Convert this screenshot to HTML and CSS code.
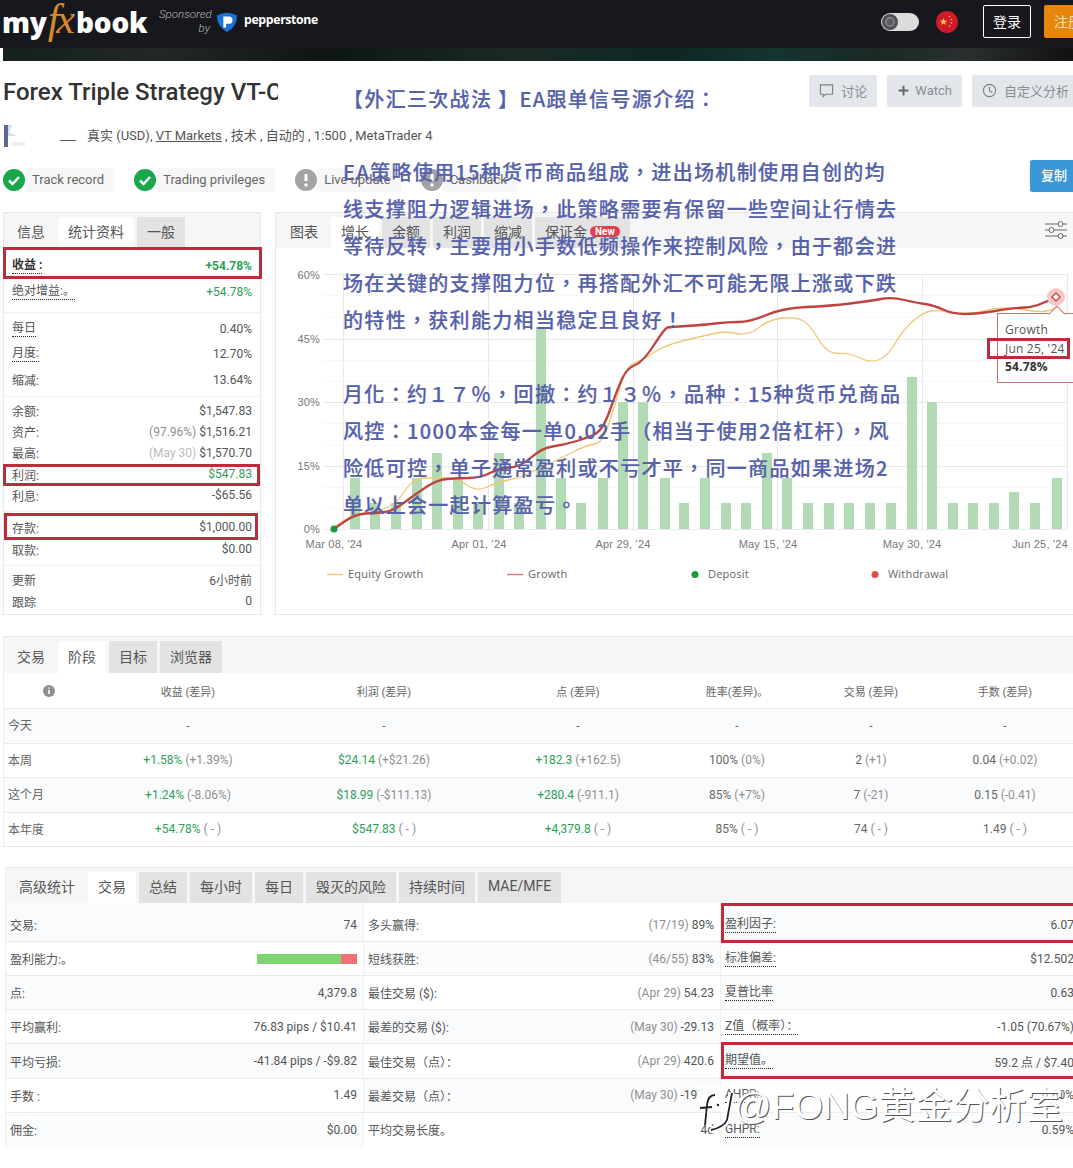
FILE: index.html
```html
<!DOCTYPE html>
<html lang="zh-CN">
<head>
<meta charset="utf-8">
<title>Forex Triple Strategy</title>
<link rel="stylesheet" href="styles.css">
</head>
<body>
<div class="page">
  <header class="topbar">
    <div class="logo"><span>my</span><em>fx</em><span>book</span></div>
    <div class="sponsor">Sponsored<br>by</div>
    <svg class="pep-icon" viewBox="0 0 24 24"><path class="pep-shield" d="M1 5 Q12 -1 23 5 Q23 17 12 23 Q1 17 1 5Z"/><path class="pep-p" d="M8 18V6h6a4 4 0 0 1 0 8h-3v4Z"/></svg>
    <div class="pep-name">pepperstone</div>
    <div class="topbar-right">
      <div class="toggle"><span class="knob"></span></div>
      <svg class="flag" viewBox="0 0 22 22"><circle class="flag-bg" cx="11" cy="11" r="11"/><path class="flag-star" d="M7.500 7l1 2.600 2.700.1-2.100 1.700.8 2.700-2.400-1.600-2.300 1.600.7-2.700-2.100-1.700 2.700-.1Z"/><circle class="flag-star" cx="13.500" cy="5.500" r=".8"/><circle class="flag-star" cx="15.500" cy="8.500" r=".8"/><circle class="flag-star" cx="15.500" cy="12" r=".8"/><circle class="flag-star" cx="13.500" cy="15" r=".8"/></svg>
      <div class="login">登录</div>
      <div class="register">注册</div>
    </div>
  </header>
  <div class="strip"></div>

  <div class="title-row">
    <h1 class="title">Forex Triple Strategy VT-C</h1>
    <div class="actions">
      <div class="action"><svg class="ic" viewBox="0 0 16 16"><path d="M1.500 2h13v10H7l-2.500 2.500V12h-3Z"/></svg>讨论</div>
      <div class="action"><svg class="ic ic-plus" viewBox="0 0 16 16"><path d="M8 2v12M2 8h12"/></svg>Watch</div>
      <div class="action"><svg class="ic" viewBox="0 0 16 16"><circle cx="8" cy="8" r="6.500"/><path d="M8 4v4.500l3 1.500"/></svg>自定义分析</div>
    </div>
  </div>

  <div class="meta-row">
    <svg class="avatar" viewBox="0 0 22 22"><rect class="av-a" x="0" y="0" width="4" height="22"/><path class="av-b" d="M4 0h4l-3 8 6 2v1H4Z"/><rect class="av-c" x="8" y="17" width="13" height="4"/></svg>
    <span class="blank-name"></span>
    <span class="meta-text">真实 (USD), <u>VT Markets</u> , 技术 , 自动的 , 1:500 , MetaTrader 4</span>
  </div>

  <div class="badge-row">
    <div class="badge"><svg class="bi" viewBox="0 0 22 22"><circle class="ok" cx="11" cy="11" r="11"/><path class="tick" d="M6 11.500l3.500 3.500 6.500-7"/></svg><span>Track record</span></div>
    <div class="badge"><svg class="bi" viewBox="0 0 22 22"><circle class="ok" cx="11" cy="11" r="11"/><path class="tick" d="M6 11.500l3.500 3.500 6.500-7"/></svg><span>Trading privileges</span></div>
    <div class="badge"><svg class="bi" viewBox="0 0 22 22"><circle class="warn" cx="11" cy="11" r="11"/><path class="bang" d="M11 5v7"/><circle class="bang-dot" cx="11" cy="16" r="1.700"/></svg><span>Live update</span></div>
    <div class="badge"><svg class="bi" viewBox="0 0 22 22"><circle class="warn" cx="11" cy="11" r="11"/><path class="bang" d="M11 5v7"/><circle class="bang-dot" cx="11" cy="16" r="1.700"/></svg><span>Cashback</span></div>
    <div class="copy">复制</div>
  </div>

  <div class="panels">
    <section class="panel panel-left">
      <div class="tabs">
        <div class="tab">信息</div><div class="tab active">统计资料</div><div class="tab off">一般</div>
      </div>
      <div class="group g1">
        <div class="stat h26"><b class="lbl dot">收益 :</b><b class="green">+54.78%</b></div>
        <div class="stat h26"><span class="lbl dot">绝对增益:。</span><span class="green">+54.78%</span></div>
      </div>
      <div class="group g2">
        <div class="stat h25"><span class="lbl dot">每日</span><span>0.40%</span></div>
        <div class="stat h25"><span class="lbl dot">月度:</span><span>12.70%</span></div>
        <div class="stat h25"><span class="lbl">缩减:</span><span>13.64%</span></div>
      </div>
      <div class="group g3">
        <div class="stat h21"><span class="lbl">余额:</span><span>$1,547.83</span></div>
        <div class="stat h21"><span class="lbl">资产:</span><span><i class="muted">(97.96%)</i> $1,516.21</span></div>
        <div class="stat h21"><span class="lbl">最高:</span><span><i class="muted light">(May 30)</i> $1,570.70</span></div>
        <div class="stat h21"><span class="lbl">利润:</span><span class="green">$547.83</span></div>
        <div class="stat h21"><span class="lbl">利息:</span><span>-$65.56</span></div>
      </div>
      <div class="group g4">
        <div class="stat h22"><span class="lbl">存款:</span><span>$1,000.00</span></div>
        <div class="stat h22"><span class="lbl">取款:</span><span>$0.00</span></div>
      </div>
      <div class="group g5">
        <div class="stat h22"><span class="lbl">更新</span><span>6小时前</span></div>
        <div class="stat h22"><span class="lbl">跟踪</span><span>0</span></div>
      </div>
    </section>

    <section class="panel panel-chart">
      <div class="tabs">
        <div class="tab">图表</div><div class="tab active">增长</div><div class="tab off">余额</div><div class="tab off">利润</div><div class="tab off">缩减</div>
        <div class="tab off tab-new">保证金<span class="new">New</span></div>
        <svg class="sliders" viewBox="0 0 22 20"><path d="M0 4h13M18 4h4M0 10h4M9 10h13M0 16h13M18 16h4"/><circle cx="15.500" cy="4" r="2.500"/><circle cx="6.500" cy="10" r="2.500"/><circle cx="15.500" cy="16" r="2.500"/></svg>
      </div>
      <svg class="chart" viewBox="276 248 797 366" width="797" height="366">
        <g class="minor">
          <path d="M323 295.500H1068M323 317.500H1068M323 360.500H1068M323 381.500H1068M323 423.500H1068M323 445.500H1068M323 487.500H1068M323 508.500H1068"/>
        </g>
        <g class="grid">
          <path d="M323 274.500H1068M323 339.500H1068M323 402.500H1068M323 466.500H1068M323 529.500H1068"/>
          <path d="M343.500 274V529M488.500 274V529M633.500 274V529M777.500 274V529M922.500 274V529M1067.500 274V529"/>
        </g>
        <g class="bars">
          <rect x="350" y="478" width="10" height="51"/><rect x="370" y="503" width="10" height="26"/><rect x="391" y="503" width="10" height="26"/><rect x="412" y="478" width="10" height="51"/><rect x="432" y="453" width="10" height="76"/><rect x="453" y="478" width="10" height="51"/><rect x="473" y="503" width="10" height="26"/><rect x="494" y="453" width="10" height="76"/><rect x="514" y="503" width="10" height="26"/><rect x="536" y="327" width="10" height="202"/><rect x="556" y="478" width="10" height="51"/><rect x="576" y="503" width="10" height="26"/><rect x="598" y="478" width="10" height="51"/><rect x="618" y="402" width="10" height="127"/><rect x="638" y="402" width="10" height="127"/><rect x="660" y="478" width="10" height="51"/>
          <rect x="679" y="503" width="10" height="26"/><rect x="700" y="478" width="10" height="51"/><rect x="721" y="503" width="10" height="26"/><rect x="741" y="503" width="10" height="26"/><rect x="762" y="453" width="10" height="76"/><rect x="782" y="478" width="10" height="51"/><rect x="803" y="503" width="10" height="26"/><rect x="824" y="503" width="10" height="26"/><rect x="844" y="503" width="10" height="26"/><rect x="865" y="503" width="10" height="26"/><rect x="886" y="503" width="10" height="26"/><rect x="907" y="377" width="10" height="152"/><rect x="927" y="402" width="10" height="127"/><rect x="948" y="503" width="10" height="26"/><rect x="968" y="503" width="10" height="26"/><rect x="989" y="503" width="10" height="26"/><rect x="1009" y="492" width="10" height="37"/><rect x="1030" y="503" width="10" height="26"/><rect x="1052" y="478" width="10" height="51"/>
        </g>
        <path class="line-eq" d="M334 527 L344.500 520.500 Q355 514 366 513 Q377 512 387 507.500 Q397 503 405 490.500 Q413 478 425 478 Q437 478 447 478 Q457 478 467 485 Q477 492 487 487 Q497 482 508.500 480 Q520 478 531 472.500 Q542 467 552.500 462 Q563 457 575 451 Q587 445 595 444 Q603 443 610 420 Q617 397 622 381 Q627 365 635 362.500 Q643 360 654 352.500 Q665 345 684 340.500 Q703 336 714 333.500 Q725 331 736.500 333.500 Q748 336 759 327.500 Q770 319 783.500 318 Q797 317 803.500 321 Q810 325 818.500 339.500 Q827 354 838.500 353.500 Q850 353 860 358 Q870 363 878.500 360 Q887 357 895 343.500 Q903 330 913 321 Q923 312 931.500 311 Q940 310 946.500 312 Q953 314 965 313.500 Q977 313 985 310.500 Q993 308 1003 308 Q1013 308 1021.500 309.500 Q1030 311 1040 311.500 Q1050 312 1056 307"/>
        <path class="line-gr" d="M334 529 L344.500 521.500 Q355 514 366 513.500 Q377 513 385 512 Q393 511 405 502 Q417 493 427 486.500 Q437 480 447 479 Q457 478 468.500 478 Q480 478 490 473 Q500 468 510 467.500 Q520 467 531 457.500 Q542 448 552.500 446.500 Q563 445 575 441.500 Q587 438 595 434 Q603 430 610 410 Q617 390 622 379 Q627 368 635 365 Q643 362 654 345 Q665 328 667.500 327.500 Q670 327 686.500 326 Q703 325 715 323.500 Q727 322 738.500 322 Q750 322 766.500 315 Q783 308 806.500 307 Q830 306 850 303.500 Q870 301 881 299 Q892 297 904.500 300 Q917 303 925 304 Q933 305 943 309.500 Q953 314 965 314 Q977 314 995 311 Q1013 308 1025 307.500 Q1037 307 1056 297"/>
        <circle class="start" cx="334" cy="529" r="3.500"/>
        <circle class="halo" cx="1056" cy="297" r="9"/>
        <path class="ring" d="M1056 293l4 4-4 4-4-4Z"/>
        <g class="axis">
          <text x="320" y="279" text-anchor="end">60%</text><text x="320" y="343" text-anchor="end">45%</text><text x="320" y="406" text-anchor="end">30%</text><text x="320" y="470" text-anchor="end">15%</text><text x="320" y="533" text-anchor="end">0%</text>
          <text x="334" y="548" text-anchor="middle">Mar 08, '24</text><text x="479" y="548" text-anchor="middle">Apr 01, '24</text><text x="623" y="548" text-anchor="middle">Apr 29, '24</text><text x="768" y="548" text-anchor="middle">May 15, '24</text><text x="912" y="548" text-anchor="middle">May 30, '24</text><text x="1040" y="548" text-anchor="middle">Jun 25, '24</text>
        </g>
        <g class="legend">
          <path class="lg-eq" d="M327 574.500h16"/><text x="348" y="578">Equity Growth</text>
          <path class="lg-gr" d="M507 574.500h16"/><text x="528" y="578">Growth</text>
          <circle class="start" cx="695" cy="574.500" r="3.500"/><text x="708" y="578">Deposit</text>
          <circle class="wd" cx="875" cy="574.500" r="3.500"/><text x="888" y="578">Withdrawal</text>
        </g>
      </svg>
    </section>
  </div>

  <section class="table-sec periods">
    <div class="tabs tabs-sm">
      <div class="tab">交易</div><div class="tab active">阶段</div><div class="tab off">目标</div><div class="tab off">浏览器</div>
    </div>
    <div class="p-row p-head">
      <div class="p-info"><svg class="info" viewBox="0 0 12 12"><circle cx="6" cy="6" r="6"/><path d="M6 5v4M6 2.500v1.200"/></svg></div><div>收益 (差异)</div><div>利润 (差异)</div><div>点 (差异)</div><div>胜率(差异)。</div><div>交易 (差异)</div><div>手数 (差异)</div>
    </div>
    <div class="p-row alt"><div class="p-lbl">今天</div><div>-</div><div>-</div><div>-</div><div>-</div><div>-</div><div>-</div></div>
    <div class="p-row"><div class="p-lbl">本周</div><div><span class="green">+1.58%</span> <i class="muted">(+1.39%)</i></div><div><span class="green">$24.14</span> <i class="muted">(+$21.26)</i></div><div><span class="green">+182.3</span> <i class="muted">(+162.5)</i></div><div>100% <i class="muted">(0%)</i></div><div>2 <i class="muted">(+1)</i></div><div>0.04 <i class="muted">(+0.02)</i></div></div>
    <div class="p-row alt"><div class="p-lbl">这个月</div><div><span class="green">+1.24%</span> <i class="muted">(-8.06%)</i></div><div><span class="green">$18.99</span> <i class="muted">(-$111.13)</i></div><div><span class="green">+280.4</span> <i class="muted">(-911.1)</i></div><div>85% <i class="muted">(+7%)</i></div><div>7 <i class="muted">(-21)</i></div><div>0.15 <i class="muted">(-0.41)</i></div></div>
    <div class="p-row"><div class="p-lbl">本年度</div><div><span class="green">+54.78%</span> <i class="muted">( - )</i></div><div><span class="green">$547.83</span> <i class="muted">( - )</i></div><div><span class="green">+4,379.8</span> <i class="muted">( - )</i></div><div>85% <i class="muted">( - )</i></div><div>74 <i class="muted">( - )</i></div><div>1.49 <i class="muted">( - )</i></div></div>
  </section>

  <section class="table-sec advanced">
    <div class="tabs tabs-sm">
      <div class="tab">高级统计</div><div class="tab active">交易</div><div class="tab off">总结</div><div class="tab off">每小时</div><div class="tab off">每日</div><div class="tab off">毁灭的风险</div><div class="tab off">持续时间</div><div class="tab off">MAE/MFE</div>
    </div>
    <div class="a-row first alt">
      <div class="cell"><span>交易:</span><span>74</span></div>
      <div class="cell plain"><span>多头赢得:</span><span><i class="muted">(17/19)</i> 89%</span></div>
      <div class="cell"><span class="dot">盈利因子:</span><span>6.07</span></div>
    </div>
    <div class="a-row">
      <div class="cell"><span>盈利能力:。</span><span class="ratio"><span class="ratio-win"></span><span class="ratio-loss"></span></span></div>
      <div class="cell alt"><span>短线获胜:</span><span><i class="muted">(46/55)</i> 83%</span></div>
      <div class="cell"><span class="dot">标准偏差:</span><span>$12.502</span></div>
    </div>
    <div class="a-row alt">
      <div class="cell"><span>点:</span><span>4,379.8</span></div>
      <div class="cell plain"><span>最佳交易 ($):</span><span><i class="muted">(Apr 29)</i> 54.23</span></div>
      <div class="cell"><span class="dot">夏普比率</span><span>0.63</span></div>
    </div>
    <div class="a-row">
      <div class="cell"><span>平均赢利:</span><span>76.83 pips / $10.41</span></div>
      <div class="cell alt"><span>最差的交易 ($):</span><span><i class="muted">(May 30)</i> -29.13</span></div>
      <div class="cell"><span class="dot">Z值（概率）：</span><span>-1.05 (70.67%)</span></div>
    </div>
    <div class="a-row alt">
      <div class="cell"><span>平均亏损:</span><span>-41.84 pips / -$9.82</span></div>
      <div class="cell plain"><span>最佳交易（点）：</span><span><i class="muted">(Apr 29)</i> 420.6</span></div>
      <div class="cell"><span class="dot">期望值。</span><span>59.2 点 / $7.40</span></div>
    </div>
    <div class="a-row">
      <div class="cell"><span>手数 :</span><span>1.49</span></div>
      <div class="cell alt"><span>最差交易（点）：</span><span><i class="muted">(May 30)</i> -197.9</span></div>
      <div class="cell"><span class="dot">AHPR:</span><span>0.60%</span></div>
    </div>
    <div class="a-row alt">
      <div class="cell"><span>佣金:</span><span>$0.00</span></div>
      <div class="cell plain"><span>平均交易长度。</span><span>4d</span></div>
      <div class="cell"><span class="dot">GHPR:</span><span>0.59%</span></div>
    </div>
  </section>

  <div class="tip">
    <div>Growth</div>
    <div>Jun 25, '24</div>
    <b>54.78%</b>
  </div>

  <div class="hl hl-gain"></div>
  <div class="hl hl-profit"></div>
  <div class="hl hl-deposit"></div>
  <div class="hl hl-date"></div>
  <div class="hl hl-factor"></div>
  <div class="hl hl-expect"></div>

  <div class="note" lang="zh-TW">
    <p class="note-title">【外汇三次战法 】EA跟单信号源介绍：</p>
    <p>EA策略使用15种货币商品组成，进出场机制使用自创的均<br>线支撑阻力逻辑进场，此策略需要有保留一些空间让行情去<br>等待反转，主要用小手数低频操作来控制风险，由于都会进<br>场在关键的支撑阻力位，再搭配外汇不可能无限上涨或下跌<br>的特性，获利能力相当稳定且良好！</p>
    <p>月化：约１７％，回撤：约１３％，品种：15种货币兑商品<br>风控：1000本金每一单0.02手（相当于使用2倍杠杆），风<br>险低可控，单子通常盈利或不亏才平，同一商品如果进场2<br>单以上会一起计算盈亏。</p>
  </div>

  <div class="watermark">
    <svg class="wm-logo" viewBox="698 1085 36 50">
      <rect class="wm-patch" x="698" y="1086" width="24" height="24"/>
      <path class="wm-halo" d="M715 1095Q708 1095 707 1105L705 1125M700 1108L712 1107M732 1093L727 1120Q724 1127 711 1130"/>
      <path class="wm-ink" d="M715 1095Q708 1095 707 1105L705 1125M700 1108L712 1107M732 1093L727 1120Q724 1127 711 1130"/>
      <circle class="wm-dot" cx="718" cy="1105" r="1.200"/>
    </svg>
    <span>@FONG黄金分析室</span>
  </div>
</div>
</body>
</html>
```
FILE: styles.css
```css
* { box-sizing: border-box; }
html, body { margin: 0; padding: 0; background: #fff; }
body { font-family: Roboto, "Noto Sans CJK SC", sans-serif; font-size: 12px; color: #555; }
.page { position: relative; width: 1073px; height: 1168px; overflow: hidden; background: #fff; }

/* top bar */
.topbar { display: flex; align-items: center; height: 48px; padding-bottom: 5px; background: #17181d; color: #fff; }
.logo { display: flex; align-items: baseline; margin: -3px 0 0 2px; font-family: "Open Sans", sans-serif; font-weight: 800; font-size: 28px; letter-spacing: -.2px; line-height: 1; color: #fff; width: 145px; }
.logo em { font-family: "Liberation Serif", serif; font-weight: 400; font-style: italic; font-size: 42px; letter-spacing: -3px; line-height: 28px; color: #d9892b; margin: 0 4px 0 1px; }
.sponsor { margin: -2px 0 0 12px; width: 51px; text-align: right; font-style: italic; font-weight: 300; font-size: 11.500px; line-height: 14px; color: #b9b9bb; }
.pep-icon { width: 22px; height: 22px; margin-left: 6px; }
.pep-shield { fill: #1a72d8; }
.pep-p { fill: #fff; }
.pep-name { margin: -4px 0 0 6px; font-family: "Open Sans", sans-serif; font-weight: 700; font-size: 12.300px; letter-spacing: -.35px; color: #fff; }
.topbar-right { display: flex; align-items: center; margin-left: auto; margin-right: -12px; }
.toggle { width: 38px; height: 18px; border-radius: 9px; background: #dcdcdc; display: flex; align-items: center; padding-left: 1px; }
.knob { width: 16px; height: 16px; border-radius: 50%; background: #5b5d62; border: 3px solid #4f5156; box-shadow: inset 0 0 0 1.500px #8a8b8f; }
.flag { width: 22px; height: 22px; margin-left: 17px; }
.flag-bg { fill: #cf1a2c; }
.flag-star { fill: #f6c945; }
.login { width: 48px; height: 33px; margin-left: 25px; padding-bottom: 2px; border: 1px solid #fff; border-radius: 2px; display: flex; align-items: center; justify-content: center; font-size: 14px; color: #fff; }
.register { width: 41px; height: 33px; margin-left: 13px; padding: 0 0 2px 10px; border-radius: 2px; background: #e8860c; display: flex; align-items: center; font-size: 14px; white-space: nowrap; color: #f6e2c3; }
.strip { height: 13px; margin-left: 3px; background: linear-gradient(90deg, #15201f 0, #232826 15%, #0e1512 30%, #1b2a27 48%, #0d2723 62%, #143430 72%, #1c2926 82%, #2a2f30 90%, #111 100%); }

/* title */
.title-row { display: flex; justify-content: space-between; align-items: flex-start; padding: 14px 0 0 3px; height: 46px; }
.title { width: 275px; height: 32px; margin: 0; overflow: hidden; white-space: nowrap; font-size: 24px; font-weight: 500; line-height: 34px; color: #333; }
.actions { display: flex; gap: 10px; margin-right: -6px; }
.action { display: flex; align-items: center; gap: 7px; height: 32px; padding: 0 10px 2px; background: #e3e7ec; border-radius: 2px; font-size: 13px; color: #888d94; }
.ic { width: 15px; height: 15px; fill: none; stroke: #7b8087; stroke-width: 1.200; }
.ic-plus { width: 13px; height: 13px; margin-right: -2px; stroke-width: 2.400; stroke: #666; }

.meta-row { display: flex; align-items: center; height: 22px; margin-top: 18px; padding-left: 4px; font-size: 13px; color: #555; }
.meta-text { margin-top: -3px; }
.meta-row u { text-decoration: underline; }
.avatar { width: 22px; height: 22px; }
.av-a { fill: #5a6a90; }
.av-b { fill: #d6dae2; }
.av-c { fill: #eceef1; }
.blank-name { width: 16px; height: 1px; margin: 8px 11px 0 34px; background: #555; }

.badge-row { display: flex; align-items: flex-end; height: 32px; margin-top: 13px; padding-left: 3px; }
.badge { display: flex; align-items: center; margin-right: 20px; height: 24px; }
.badge span { display: flex; align-items: center; height: 24px; padding: 0 10px 2px 7px; background: #f7f7f7; font-size: 13px; color: #666; }
.bi { width: 22px; height: 22px; flex: none; }
.ok { fill: #18a74d; }
.warn { fill: #a3a3a3; }
.tick { fill: none; stroke: #fff; stroke-width: 2.500; }
.bang { fill: none; stroke: #fff; stroke-width: 3; }
.bang-dot { fill: #fff; }
.copy { display: flex; align-items: center; height: 32px; margin-left: auto; margin-right: -5px; padding: 0 11px 3px; border-radius: 2px; background: #3a97d8; font-size: 13px; font-weight: 500; color: #fff; }

/* panels */
.panels { display: flex; gap: 14px; height: 403px; margin-top: 20px; padding-left: 3px; }
.panel { border: 1px solid #e7e7e7; }
.panel-left { width: 258px; }
.panel-chart { flex: 1; border-right: 0; }
.tabs { display: flex; gap: 3px; height: 35px; padding: 4px 0 0 4px; background: #f6f6f6; }
.panel-left .tabs, .advanced .tabs, .periods .tabs { padding-left: 3px; }
.tab { display: flex; align-items: center; justify-content: center; height: 31px; padding: 0 10px 3px; font-size: 14px; color: #555; }
.tab.active { background: #fff; }
.tab.off { background: #e3e3e3; }
.tab-new { gap: 3px; padding-right: 10px; }
.new { display: flex; align-items: center; height: 11px; padding: 0 5px; border-radius: 6px; background: #e2404f; font-size: 10px; font-weight: 700; color: #fff; }
.sliders { width: 22px; height: 20px; margin: 3px 6px 0 auto; fill: none; stroke: #666; stroke-width: 1; }

.group { padding: 0 8px; }
.g1 { height: 64px; padding-top: 5px; }
.g2 { height: 84px; padding-top: 3px; border-top: 1px solid #eee; }
.g3 { height: 115px; padding-top: 3px; border-top: 1px solid #eee; }
.g4 { height: 54px; padding-top: 4px; border-top: 1px solid #eee; }
.g5 { padding-top: 2px; border-top: 1px solid #eee; }
.stat { display: flex; justify-content: space-between; align-items: center; white-space: nowrap; }
.h26 { height: 26px; }
.h25 { height: 25.500px; }
.h21 { height: 21.200px; }
.h22 { height: 22px; }
.lbl { color: #555; }
.dot { border-bottom: 1px dotted #222; line-height: 15px; }
b.lbl { color: #333; }
.green { color: #2c9f55; }
.muted { font-style: normal; color: #8f8f8f; }
.light { color: #bbb; }

/* chart */
.chart { display: block; }
.minor path { fill: none; stroke: #f7f7f7; }
.grid path { fill: none; stroke: #e9e9e9; }
.bars rect { fill: #b2dbb5; }
.line-eq { fill: none; stroke: #efc774; stroke-width: 1.300; }
.line-gr { fill: none; stroke: #bf4440; stroke-width: 2.300; }
.start { fill: #17983d; }
.wd { fill: #d9504a; }
.halo { fill: #f6c9c9; }
.ring { fill: #fff; stroke: #d24b4b; stroke-width: 1.500; }
.axis text { font-family: "Liberation Sans", sans-serif; font-size: 11px; letter-spacing: .2px; fill: #777; }
.legend text { font-family: "Open Sans", sans-serif; font-size: 11px; letter-spacing: .2px; fill: #666; }
.lg-eq { stroke: #efc774; stroke-width: 1.500; }
.lg-gr { stroke: #d77f7d; stroke-width: 1.500; }

/* periods */
.table-sec { border-top: 1px solid #e7e7e7; }
.periods { margin: 21px 0 0 3px; border-left: 1px solid #eee; }
.periods .tabs { height: 36px; }
.periods .tab { height: 32px; }
.p-row { display: grid; grid-template-columns: 90px 188px 204px 184px 134px 134px 134px; align-items: center; height: 34.500px; border-bottom: 1px solid #e9e9e9; text-align: center; color: #666; font-size: 12px; }
.p-head { height: 36px; font-size: 11px; color: #666; }
.p-row.alt { background: #fafbfd; }
.p-info { display: flex; justify-content: center; }
.info { width: 12px; height: 12px; }
.info circle { fill: #8e8e8e; }
.info path { fill: none; stroke: #fff; stroke-width: 1.600; }
.p-lbl { text-align: left; padding: 0 0 2px 4px; }

/* advanced */
.advanced { margin: 20px 0 0 5px; border-left: 1px solid #eee; border-bottom: 1px solid #e7e7e7; height: 280px; }
.advanced .tabs { height: 35px; }
.a-row { display: grid; grid-template-columns: 357px 357px 354px; height: 34.170px; border-bottom: 1px solid #e9e9e9; }
.a-row.first { height: 39px; }
.a-row.alt { background: #fafbfd; }
.a-row:last-child { border-bottom: 0; }
.cell { display: flex; justify-content: space-between; align-items: center; padding: 0 6px 0 4px; border-left: 1px solid #f0f0f0; white-space: nowrap; font-size: 12px; color: #555; }
.cell:first-child { border-left: 0; }
.a-row.first .cell { padding-top: 5px; }
.cell.alt { background: #fafbfd; }
.cell.plain { background: #fff; }
.cell:last-child { padding-right: 0; }
.ratio { display: flex; width: 100px; height: 10px; }
.ratio-win { width: 84px; background: #7dd56f; }
.ratio-loss { flex: 1; background: #f07176; }

/* overlays */
.tip { position: absolute; left: 997px; top: 313px; width: 90px; height: 70px; padding: 7px 0 0 7px; border: 1px solid #c9756f; background: #fff; font-family: "Open Sans", sans-serif; font-size: 12px; line-height: 18.500px; letter-spacing: .2px; color: #555; }
.tip::before { content: ""; position: absolute; left: 53px; top: -6px; width: 11px; height: 11px; border-left: 1px solid #c9756f; border-top: 1px solid #c9756f; background: #fff; transform: rotate(45deg); }
.tip b { color: #333; font-size: 12px; }
.hl { position: absolute; border: 3px solid #ba2e3c; }
.hl-gain { left: 3px; top: 247px; width: 259px; height: 32px; }
.hl-profit { left: 3px; top: 464px; width: 257px; height: 22px; }
.hl-deposit { left: 4px; top: 513px; width: 254px; height: 27px; }
.hl-date { left: 987px; top: 338px; width: 83px; height: 21px; }
.hl-factor { left: 721px; top: 903px; width: 360px; height: 40px; }
.hl-expect { left: 721px; top: 1042px; width: 360px; height: 37px; }
.note { position: absolute; left: 343px; top: 80px; width: 570px; font-family: "Noto Sans CJK TC", "Noto Sans CJK SC", sans-serif; font-size: 20px; font-weight: 500; line-height: 37px; letter-spacing: 1.320px; -webkit-text-stroke: .2px #5661aa; color: #5661aa; white-space: nowrap; }
.note p { margin: 0 0 37px; }
.note .note-title { margin-bottom: 36px; }
.watermark { position: absolute; left: 698px; top: 1078px; display: flex; align-items: center; gap: 0; height: 50px; white-space: nowrap; font-family: "Liberation Sans", "Noto Sans CJK SC", sans-serif; font-size: 37px; color: #fff; text-shadow: 1px 1px 0 #555, 0 0 6px #fff; }
.wm-logo { width: 36px; height: 50px; margin-top: 14px; overflow: visible; }
.wm-patch { fill: #fff; opacity: .9; }
.wm-halo { fill: none; stroke: #fff; stroke-width: 7; }
.wm-ink { fill: none; stroke: #222; stroke-width: 1.800; }
.wm-dot { fill: #222; }
```
